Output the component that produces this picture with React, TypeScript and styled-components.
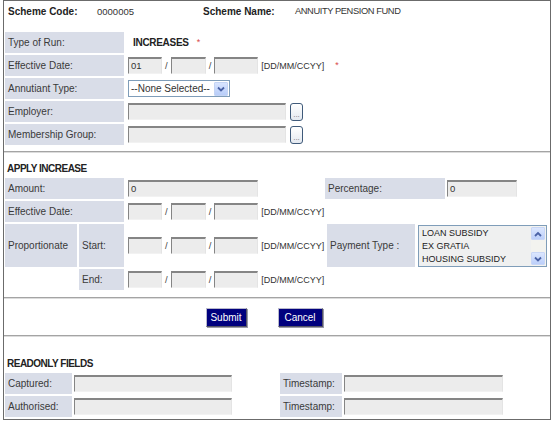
import React from 'react';
import styled, { createGlobalStyle } from 'styled-components';

const Global = createGlobalStyle`
  html, body { margin: 0; padding: 0; background: #fff; }
  body { font-family: "Liberation Sans", Arial, sans-serif; color: #333; }
  * { box-sizing: border-box; }
`;

const Frame = styled.div`
  margin-left: 3px;
  width: 548px;
  border: 1px solid #6b6b6b;
  padding: 0 1px 2px 1px;
  display: flex;
  flex-direction: column;
`;

const Header = styled.div`
  display: grid;
  grid-template-columns: 89px 106px 92px 1fr;
  align-items: center;
  height: 20px;
  padding-left: 3px;
  margin-bottom: 11px;
`;

const HeadLabel = styled.span`
  font-size: 10px;
  font-weight: bold;
  color: #222;
`;

const HeadValue = styled.span<{ $caps?: boolean }>`
  font-size: ${(p) => (p.$caps ? '9.3px' : '9.5px')};
  letter-spacing: ${(p) => (p.$caps ? '-0.4px' : '0')};
  color: #333;
`;

const Grid1 = styled.div`
  display: grid;
  grid-template-columns: 119px 1fr;
  grid-auto-rows: 21px;
  row-gap: 2px;
  column-gap: 4px;
`;

const Label = styled.div<{ $w?: number; $blank?: boolean }>`
  ${(p) => (p.$w ? `width: ${p.$w}px; flex: none;` : '')}
  background: ${(p) => (p.$blank ? 'transparent' : '#d9dde8')};
  display: flex;
  align-items: center;
  padding-left: 3px;
  font-size: 10px;
  color: #3a3a3a;
  white-space: nowrap;
`;

const Value = styled.div<{ $w?: number; $pad?: number }>`
  display: flex;
  align-items: center;
  gap: 3px;
  ${(p) => (p.$w ? `width: ${p.$w}px; flex: none;` : 'flex: 1;')}
  padding-left: ${(p) => p.$pad ?? 0}px;
  white-space: nowrap;
`;

const RunType = styled.span`
  font-size: 10px;
  font-weight: bold;
  letter-spacing: -0.3px;
  color: #222;
  margin-left: 5px;
`;

const Req = styled.span<{ $ml: number }>`
  color: #d84848;
  font-size: 9px;
  margin-left: ${(p) => p.$ml}px;
  align-self: flex-start;
  margin-top: 5px;
`;

const Field = styled.div<{ $w: number }>`
  width: ${(p) => p.$w}px;
  height: 17px;
  flex: none;
  background: #ececec;
  border-top: 2px solid #858585;
  border-left: 1px solid #858585;
  border-right: 1px solid #e4e4e4;
  border-bottom: 1px solid #f2f2f2;
  font-size: 9.5px;
  line-height: 13px;
  padding-left: 2px;
  color: #333;
`;

const Slash = styled.span`
  font-size: 9.5px;
  color: #444;
`;

const Hint = styled.span`
  font-size: 9px;
  color: #333;
`;

const SelectBox = styled.div`
  width: 102px;
  height: 17px;
  border: 1px solid #7f9db9;
  background: #fff;
  display: flex;
  align-items: center;
  justify-content: space-between;
  padding: 1px 1px 1px 2px;
  font-size: 10px;
  color: #333;
`;

const DropBtn = styled.div`
  width: 14px;
  height: 14px;
  background: linear-gradient(#d8e4fe, #b8cdf8);
  border: 1px solid #c4d4f4;
  border-radius: 1px;
  display: flex;
  align-items: center;
  justify-content: center;
`;

const DotsBtn = styled.div`
  width: 13px;
  height: 18px;
  margin-left: 1px;
  border: 1px solid #3f5a7a;
  border-radius: 3px;
  background: linear-gradient(#ffffff, #e4e9f0);
  font-size: 8px;
  color: #777;
  display: flex;
  align-items: flex-end;
  justify-content: center;
  padding-bottom: 2px;
  line-height: 6px;
`;

const Rule = styled.div<{ $mt: number }>`
  margin: ${(p) => p.$mt}px -1px 0;
  height: 2px;
  border-top: 1px solid #a4a4a4;
  border-bottom: 1px solid #dcdcdc;
`;

const SectionTitle = styled.div<{ $pt: number }>`
  font-size: 10px;
  font-weight: bold;
  letter-spacing: -0.5px;
  line-height: 12px;
  color: #222;
  padding: ${(p) => p.$pt}px 0 3px 2px;
`;

const Rows = styled.div<{ $gap: number }>`
  display: flex;
  flex-direction: column;
  gap: ${(p) => p.$gap}px;
`;

const Row = styled.div<{ $h: number }>`
  display: flex;
  gap: 2px;
  height: ${(p) => p.$h}px;
`;

const ListBox = styled.div`
  width: 129px;
  height: 42px;
  margin: 1px 0 0 1px;
  border: 1px solid #7f9db9;
  background: #eff0f0;
  display: flex;
`;

const ListItems = styled.div`
  flex: 1;
  padding: 1px 0 0 3px;
  font-size: 9px;
  line-height: 13px;
  color: #222;
`;

const ScrollBar = styled.div`
  width: 15px;
  display: flex;
  flex-direction: column;
  justify-content: space-between;
  padding: 1px 1px 1px 0;
  background: #f3f3ef;
`;

const ScrollBtn = styled.div`
  height: 13px;
  background: linear-gradient(#dbe6fe, #bccffa);
  border: 1px solid #c8d6f6;
  border-radius: 1px;
  display: flex;
  align-items: center;
  justify-content: center;
`;

const ButtonRow = styled.div`
  height: 36px;
  display: flex;
  align-items: center;
  justify-content: center;
  gap: 31px;
  padding-right: 26px;
`;

const NavyButton = styled.button<{ $w: number }>`
  width: ${(p) => p.$w}px;
  height: 19px;
  background: #00007e;
  color: #fff;
  font-family: "Liberation Sans", Arial, sans-serif;
  font-size: 10px;
  padding: 0;
  border: 1px solid;
  border-color: #b8b8cc #555566 #555566 #b8b8cc;
  box-shadow: 1px 1px 0 #9a9aa8;
`;

const Chevron = ({ up }: { up?: boolean }) => (
  <svg width="8" height="6" viewBox="0 0 8 6">
    <path
      d={up ? 'M1 5 L4 2 L7 5' : 'M1 1.5 L4 4.5 L7 1.5'}
      fill="none"
      stroke="#4a62a6"
      strokeWidth="1.8"
    />
  </svg>
);

const DateGroup = ({ first }: { first?: string }) => (
  <>
    <Field $w={34}>{first}</Field>
    <Slash>/</Slash>
    <Field $w={35} />
    <Slash>/</Slash>
    <Field $w={44} />
    <Hint>[DD/MM/CCYY]</Hint>
  </>
);

export default function App() {
  return (
    <>
      <Global />
      <Frame>
        <Header>
          <HeadLabel>Scheme Code:</HeadLabel>
          <HeadValue>0000005</HeadValue>
          <HeadLabel>Scheme Name:</HeadLabel>
          <HeadValue $caps>ANNUITY PENSION FUND</HeadValue>
        </Header>

        <Grid1>
          <Label>Type of Run:</Label>
          <Value>
            <RunType>INCREASES</RunType>
            <Req $ml={5}>*</Req>
          </Value>
          <Label>Effective Date:</Label>
          <Value>
            <DateGroup first="01" />
            <Req $ml={8}>*</Req>
          </Value>
          <Label>Annutiant Type:</Label>
          <Value>
            <SelectBox>
              <span>--None Selected--</span>
              <DropBtn>
                <Chevron />
              </DropBtn>
            </SelectBox>
          </Value>
          <Label>Employer:</Label>
          <Value>
            <Field $w={158} />
            <DotsBtn>...</DotsBtn>
          </Value>
          <Label>Membership Group:</Label>
          <Value>
            <Field $w={158} />
            <DotsBtn>...</DotsBtn>
          </Value>
        </Grid1>

        <Rule $mt={6} />
        <SectionTitle $pt={10}>APPLY INCREASE</SectionTitle>

        <Rows $gap={2}>
          <Row $h={21}>
            <Label $w={119}>Amount:</Label>
            <Value $w={197} $pad={2}>
              <Field $w={130}>0</Field>
            </Value>
            <Label $w={120}>Percentage:</Label>
            <Value $pad={0}>
              <Field $w={70}>0</Field>
            </Value>
          </Row>
          <Row $h={21}>
            <Label $w={119}>Effective Date:</Label>
            <Value $pad={2}>
              <DateGroup />
            </Value>
          </Row>
          <Row $h={43}>
            <Label $w={72}>Proportionate</Label>
            <Label $w={45}>Start:</Label>
            <Value $w={199} $pad={2}>
              <DateGroup />
            </Value>
            <Label $w={88}>Payment Type :</Label>
            <Value $pad={0}>
              <ListBox>
                <ListItems>
                  <div>LOAN SUBSIDY</div>
                  <div>EX GRATIA</div>
                  <div>HOUSING SUBSIDY</div>
                </ListItems>
                <ScrollBar>
                  <ScrollBtn>
                    <Chevron up />
                  </ScrollBtn>
                  <ScrollBtn>
                    <Chevron />
                  </ScrollBtn>
                </ScrollBar>
              </ListBox>
            </Value>
          </Row>
          <Row $h={21}>
            <Label $w={72} $blank />
            <Label $w={45}>End:</Label>
            <Value $pad={2}>
              <DateGroup />
            </Value>
          </Row>
        </Rows>

        <Rule $mt={7} />
        <ButtonRow>
          <NavyButton $w={41}>Submit</NavyButton>
          <NavyButton $w={45}>Cancel</NavyButton>
        </ButtonRow>
        <Rule $mt={0} />

        <SectionTitle $pt={21}>READONLY FIELDS</SectionTitle>
        <Rows $gap={2}>
          <Row $h={21}>
            <Label $w={67}>Captured:</Label>
            <Value $w={204}>
              <Field $w={158} />
            </Value>
            <Label $w={62}>Timestamp:</Label>
            <Value>
              <Field $w={159} />
            </Value>
          </Row>
          <Row $h={21}>
            <Label $w={67}>Authorised:</Label>
            <Value $w={204}>
              <Field $w={158} />
            </Value>
            <Label $w={62}>Timestamp:</Label>
            <Value>
              <Field $w={159} />
            </Value>
          </Row>
        </Rows>
      </Frame>
    </>
  );
}
